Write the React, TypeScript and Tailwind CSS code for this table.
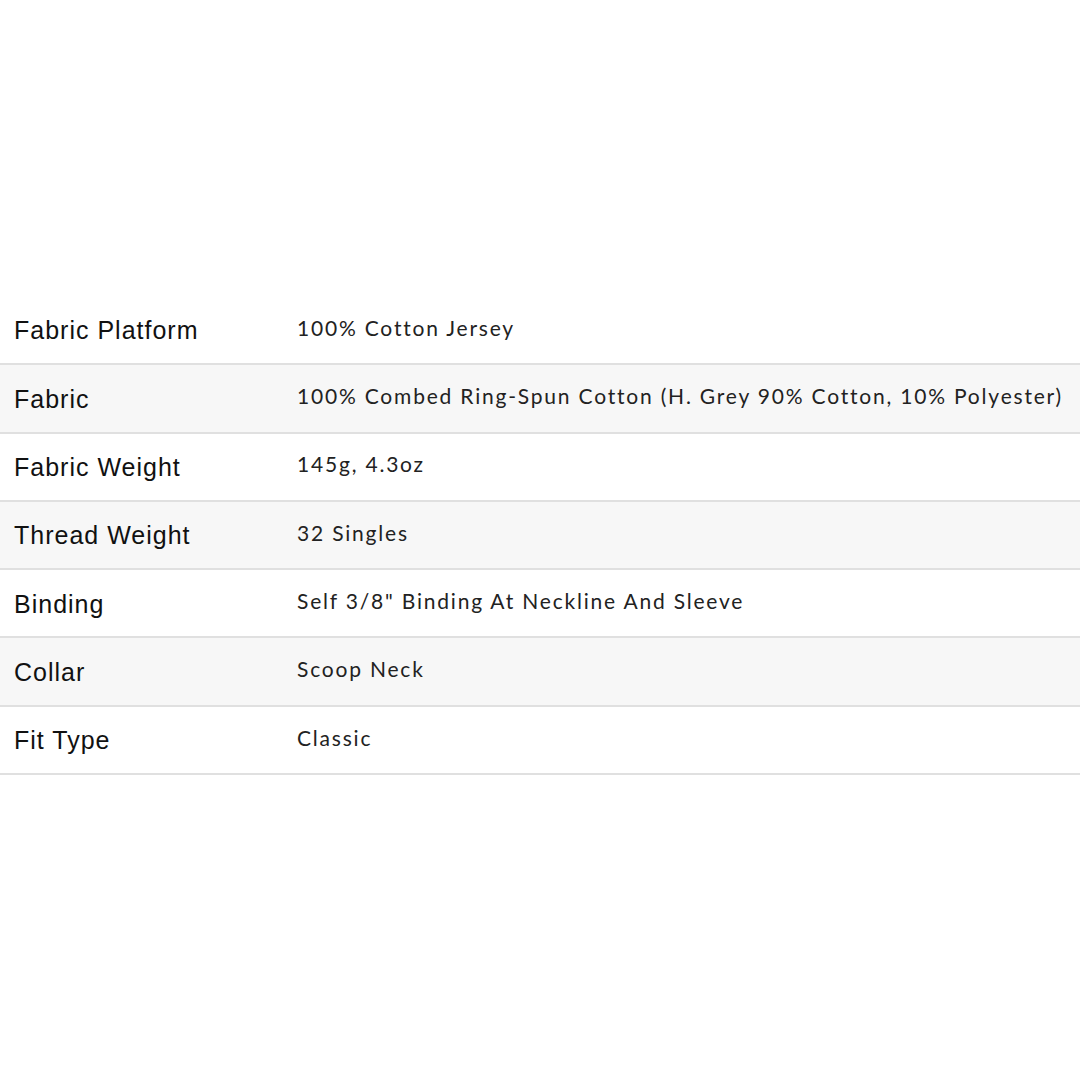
import React from 'react';

const specs: { label: string; value: string }[] = [
  { label: 'Fabric Platform', value: '100% Cotton Jersey' },
  { label: 'Fabric', value: '100% Combed Ring-Spun Cotton (H. Grey 90% Cotton, 10% Polyester)' },
  { label: 'Fabric Weight', value: '145g, 4.3oz' },
  { label: 'Thread Weight', value: '32 Singles' },
  { label: 'Binding', value: 'Self 3/8" Binding At Neckline And Sleeve' },
  { label: 'Collar', value: 'Scoop Neck' },
  { label: 'Fit Type', value: 'Classic' },
];

const App: React.FC = () => {
  return (
    <div className="w-[1080px] h-[1080px] bg-white pt-[297px] overflow-hidden">
      {/* Spec table */}
      <div className="flex flex-col">
        {specs.map((row, i) => (
          <div
            key={row.label}
            className={`flex items-center h-[68.3px] border-b-2 border-[#e0e0e0] ${
              i % 2 === 1 ? 'bg-[#f7f7f7]' : 'bg-white'
            }`}
          >
            <div className="w-[297px] pl-[14px] pt-[2px] text-[25px] tracking-[1px] text-[#111] font-['Liberation_Sans',Arial,sans-serif]">
              {row.label}
            </div>
            <div className="pb-[5px] text-[21px] tracking-[1.8px] text-[#222] font-['Lato',sans-serif] whitespace-nowrap">
              {row.value}
            </div>
          </div>
        ))}
      </div>
    </div>
  );
};

export default App;
